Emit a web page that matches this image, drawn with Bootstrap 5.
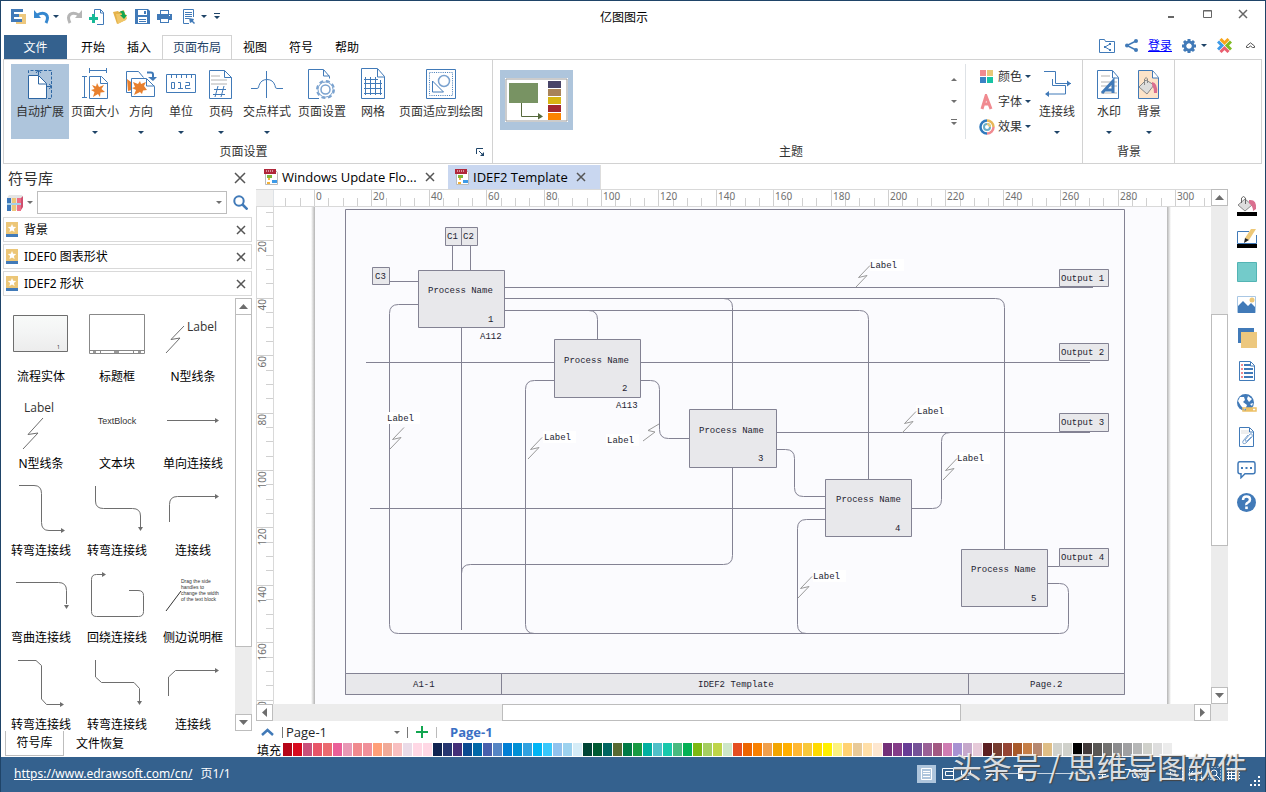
<!DOCTYPE html>
<html lang="zh-CN">
<head>
<meta charset="utf-8">
<meta name="viewport" content="width=device-width, initial-scale=1">
<title>亿图图示</title>
<link rel="stylesheet" href="https://cdn.jsdelivr.net/npm/bootstrap@5.3.0/dist/css/bootstrap.min.css">
<style>
:root{--navy:#1f4468;--bar:#34618e;--blue:#417ab8;--edge:#d2d2d2;--pick:#aec5dc}
body{font-family:"Noto Sans","Noto Sans CJK SC",sans-serif;font-size:12px;line-height:16px;color:#000;background:#fff}
button{background:none;border:0;padding:0;color:inherit;font-size:inherit;line-height:inherit}
svg{display:block;flex:none}
.app{height:100vh;border:1px solid var(--navy);border-bottom:0}
.titlebar,.menubar,.ribbon,.status,.side-head,.find-row,.lib-row,.side-tabs,.doc-tabs,.ruler-x,.hbar,.page-row,.swatches{flex:none}
.caret{width:0;height:0;border:3px solid transparent;border-top-color:#1f4468;border-bottom:0;display:inline-block}
.caret.soft{border-top-color:#707070}
.caret.up{border-top:0;border-bottom:3px solid #707070}
/* title bar */
.titlebar{height:34px;padding-left:10px}
.title-left{width:211px;gap:7px;padding-bottom:3px}
.title-right{width:239px}
/* ribbon tabs */
.menubar{height:25px;padding-left:3px}
.file-tab{width:63px;background:var(--bar);color:#fff}
.menu-tab{padding:0 11px;height:25px}
.menu-tab.on{border:1px solid var(--edge);border-bottom:0;background:#fff;color:var(--navy);padding:0 9px;width:70px}
.tabs-list{padding-left:3px}
.login{color:#00f}
/* ribbon */
.ribbon{margin:-1px 3px 0 2px;border:1px solid var(--edge);height:105px;color:#333}
.ribbon-group{border-right:1px solid var(--edge);padding-top:4px}
.group-label{height:26px;line-height:26px}
.tool{height:75px;width:40px;padding-top:4px}
.tool.w52{width:52px}.tool.w58{width:58px}.tool.w92{width:92px}.tool.w44{width:44px}
.tool .tool-name{margin-top:3px;height:18px;line-height:18px;white-space:nowrap}
.tool .caret{margin-top:10px}
.tool.on{background:var(--pick)}
.theme-card{width:73px;height:60px;background:var(--pick);padding:8px 5px;margin-top:6px}
.theme-opts{width:66px;padding-left:13px}
.theme-opts button{height:25px;gap:3px}
/* left panel */
.side{width:251px;padding-left:2px}
.side-head{height:26px;font-size:15px;line-height:26px;padding:0 6px 0 5px;color:#333}
.find-row{height:26px;padding:0 4px 3px 4px}
.lib-row{height:25px;border:1px solid #d9d9d9;margin-bottom:2px;padding:0 5px 0 2px;gap:6px}
.find-box{height:23px;border:1px solid #bdbdbd;width:190px}
.find-box input{border:0;outline:0;width:100%;font-size:12px}
.shapes{grid-template-columns:repeat(3,76px);grid-auto-rows:87px;padding-top:2px}
.shape-cell{width:76px;height:87px;white-space:nowrap}
.shape-cell svg{stroke:#6e6e6e;fill:none}
.shape-cell text{stroke:none;fill:#333}
.shape-cell .shape-name{height:18px;line-height:18px;display:block}
.side-tabs{height:26px;padding:0 0 1px 2px}
.side-tab-on{width:59px;border:1px solid #bdbdbd;border-top:0}
/* scroll bars */
.vbar{width:17px;background:#ececec}
.bar-btn{width:17px;height:17px;border:1px solid #bdbdbd;background:#fff;display:flex;align-items:center;justify-content:center;flex:none}
.thumb{background:#fff;border:1px solid #bdbdbd}
.hbar{height:17px;background:#ececec}
.tri{width:9px;height:9px;fill:#6d6d6d}
/* documents */
.doc-tab{height:24px;font-family:"Open Sans","Noto Sans CJK SC",sans-serif;font-size:13px;line-height:24px;padding:0 7px}
.doc-tab.on{background:#c9d7f0;width:153px;border-right:1px solid #ddd}
.doc-tab.first{width:187px;margin-left:5px;padding-left:3px}
.ruler-x{height:18px;border-top:1px solid #d9d9d9;border-bottom:1px solid #d9d9d9}
.ruler-corner{width:18px;background:#f0f0f0}
.ruler-y{width:18px;border-left:1px solid #d9d9d9;border-right:1px solid #d9d9d9}
.ruler-x text,.ruler-y text{font-size:10px;fill:#707070}
.canvas text{font-family:"Liberation Mono","Noto Sans CJK SC",monospace;font-size:9px;fill:#1e1e32}
.tools-right{width:37px}
.tools-right button{height:33px;width:37px;display:flex;align-items:center;justify-content:center}
.page-row{height:22px;padding-left:5px;font-family:"Open Sans","Noto Sans CJK SC",sans-serif}
.page-pick{width:119px;height:20px;border:0;padding:0 12px 0 2px;margin-left:1px;font-size:13px;line-height:20px;border-radius:0;
 --bs-form-select-bg-img:url("data:image/svg+xml,%3Csvg xmlns='http://www.w3.org/2000/svg' viewBox='0 0 6 3'%3E%3Cpath d='M0 0h6L3 3z' fill='%23707070'/%3E%3C/svg%3E");
 background-size:6px 3px;background-position:right 3px center}
.bar-mark{width:1px;height:11px;background:#777}
.swatches{height:14px;padding-left:1px}
.swatches b{font-weight:400;width:26px;white-space:nowrap}
.swatch{width:9px;height:13px;margin-right:1px;flex:none}
/* status bar */
.status{height:35px;background:var(--bar);color:#fff;padding:0 4px 2px 13px;position:relative}
.status a{color:#fff}
.status-right{gap:6px}
.zoom-range{width:92px;height:12px;appearance:none;background:linear-gradient(#c9d6e3,#c9d6e3) center/100% 1px no-repeat}
.zoom-range::-webkit-slider-thumb{appearance:none;width:5px;height:11px;background:#fff}
.stamp{position:absolute;right:18px;bottom:7px;font-size:30px;line-height:40px;font-weight:400;color:rgba(255,255,255,.82);text-shadow:1px 1px 1px #444;white-space:nowrap;pointer-events:none;font-family:"Noto Sans CJK SC",sans-serif}
</style>
</head>
<body>
<div class="app d-flex flex-column overflow-hidden">

<header class="titlebar d-flex align-items-center">
  <div class="title-left d-flex align-items-center">
    <svg width="16" height="16" viewBox="0 0 16 16"><path d="M5 5h10v10H5v-3h6V8H5z" fill="#edc87e"/><path d="M0 0h12v3H0zM0 5h8v3H0zM0 10h11v3H0zM0 0h3v13H0z" fill="#417ab8"/></svg>
    <button class="d-flex align-items-center" aria-label="撤销" style="gap:3px"><svg width="16" height="16" viewBox="0 0 16 16" fill="none" stroke="#3587cf" stroke-width="3"><path d="M3 6c8-4 13 0 9 8"/><path d="M0 1v8h7z" fill="#3587cf" stroke="none"/></svg><span class="caret"></span></button>
    <button aria-label="重做"><svg width="16" height="16" viewBox="0 0 16 16" fill="none" stroke="#b5b5b5" stroke-width="3"><path d="M13 6c-8-4-13 0-9 8"/><path d="M16 1v8H9z" fill="#b5b5b5" stroke="none"/></svg></button>
    <button aria-label="新建"><svg width="16" height="16" viewBox="0 0 16 16" fill="none"><path d="M5.500 8V.5h6l3 3V15.500H8M11.500.5v3.500h3" stroke="#417ab8"/><path d="M0 9.500h9M4.500 5v9" stroke="#17b997" stroke-width="3"/></svg></button>
    <button aria-label="打开"><svg width="16" height="16" viewBox="0 0 16 16"><path d="M1 3l5-1 1 1 5-2 2 10-9 4z" fill="#e5b24a"/><path d="M4 5l10 0 1 5-9 5z" fill="#f0c668"/><path d="M7 4c3-4 6-2 6 2h2l-3 4-4-4h2c0-2-1-3-3-2z" fill="#12a650"/></svg></button>
    <button aria-label="保存"><svg width="15" height="15" viewBox="0 0 15 15"><path d="M0 0h13l2 2v13H0z" fill="#417ab8"/><path d="M3 1h9v5H3zM3 8h9v6H3z" fill="#fff"/><path d="M9 2h2v3H9zM4 10h7v1H4zM4 12h7v1H4z" fill="#417ab8"/></svg></button>
    <button aria-label="打印"><svg width="15" height="15" viewBox="0 0 15 15"><path d="M3 1h9v4H3zM0 5h15v6H0zM3 9h9v5H3z" fill="#417ab8"/><path d="M4 2h7v3H4zM4 10h7v3H4zM12 6h1v1h-1z" fill="#fff"/></svg></button>
    <button class="d-flex align-items-center ms-1" aria-label="预览" style="gap:6px"><svg width="12" height="15" viewBox="0 0 12 15" fill="none" stroke="#417ab8"><path d="M6 14.500H.5V.5h10V8M2 3.500h7M2 5.500h7M2 7.500h7M2 9.500h4"/><path d="M6 9l5 1-1 2 2 2-1 1-2-2-2 1z" fill="#417ab8" stroke="none"/></svg><span class="caret"></span></button>
    <button aria-label="自定义"><svg width="6" height="7" viewBox="0 0 6 7" fill="#1f4468"><path d="M0 0h6v1H0zM0 3h6L3 6z"/></svg></button>
  </div>
  <div class="flex-grow-1 text-center">亿图图示</div>
  <div class="title-right d-flex justify-content-end align-items-center pe-3 pb-2">
    <button class="me-4 ms-auto" aria-label="最小化"><svg width="12" height="12" viewBox="0 0 12 12"><path d="M3 8h6v2H3z" fill="#666"/></svg></button>
    <button class="me-4" aria-label="最大化"><svg width="12" height="12" viewBox="0 0 12 12" fill="none" stroke="#666"><path d="M2.500 2.500h8v7h-8zM2.500 3h8"/></svg></button>
    <button aria-label="关闭"><svg width="12" height="12" viewBox="0 0 12 12" stroke="#666" stroke-width="1.500"><path d="M2 2l8 8M10 2l-8 8"/></svg></button>
  </div>
</header>

<nav class="menubar d-flex">
  <button class="file-tab">文件</button>
  <div class="tabs-list d-flex">
    <button class="menu-tab">开始</button><button class="menu-tab">插入</button><button class="menu-tab on">页面布局</button><button class="menu-tab">视图</button><button class="menu-tab">符号</button><button class="menu-tab">帮助</button>
  </div>
  <div class="ms-auto d-flex align-items-center pb-1" style="gap:10px;padding-right:10px">
    <button aria-label="共享文件夹"><svg width="16" height="14" viewBox="0 0 16 14" fill="none" stroke="#417ab8"><path d="M.5 13.500V.5h5l1 2h9v11z"/><path d="M11 5L6 8l5 3"/><path d="M10 4h2v2h-2zM5 7h2v2H5zM10 10h2v2h-2z" fill="#417ab8" stroke="none"/></svg></button>
    <button aria-label="共享"><svg width="13" height="13" viewBox="0 0 13 13"><path d="M11 2L2 6.500 11 11" fill="none" stroke="#417ab8" stroke-width="1.500"/><circle cx="11" cy="2" r="2" fill="#417ab8"/><circle cx="2" cy="6.500" r="2" fill="#417ab8"/><circle cx="11" cy="11" r="2" fill="#417ab8"/></svg></button>
    <a class="login" href="#">登录</a>
    <button class="d-flex align-items-center" style="gap:5px" aria-label="设置"><svg width="14" height="14" viewBox="0 0 14 14" fill="none" stroke="#417ab8"><circle cx="7" cy="7" r="4" stroke-width="3"/><path d="M7 0v3M7 11v3M0 7h3M11 7h3M2 2l2 2M10 10l2 2M2 12l2-2M10 4l2-2" stroke-width="3"/><circle cx="7" cy="7" r="2.500" fill="#fff" stroke="none"/></svg><span class="caret"></span></button>
    <button aria-label="应用"><svg width="15" height="15" viewBox="0 0 15 15" fill="none" stroke-width="3"><path d="M3.500 1l4 4 4-4" stroke="#f8a51b"/><path d="M1 3.500l4 4-4 4" stroke="#3e9be8"/><path d="M14 3.500l-4 4 4 4" stroke="#7fbb22"/><path d="M3.500 14l4-4 4 4" stroke="#ea5f70"/></svg></button>
    <button class="ms-1" aria-label="折叠功能区"><svg width="9" height="8" viewBox="0 0 9 8" fill="none" stroke="#555"><path d="M.5 4L4.500.8 8.500 4v1.500H6.500L4.500 4 2.500 5.500H.5z"/></svg></button>
  </div>
</nav>

<section class="ribbon d-flex text-center">
  <div class="ribbon-group" style="padding-left:7px;padding-right:5px">
    <div class="d-flex">
      <button class="tool w58 on d-flex flex-column align-items-center"><svg width="32" height="32" viewBox="0 0 32 32" fill="none" stroke="#2d66a3"><path d="M4.500 5V2.500h23v28H23" stroke-dasharray="3 1.500"/><path d="M4.500 7.500h10l8 8v15h-18z" fill="#fff"/><path d="M14.500 8v8h8"/><path d="M14.500 7V3M12 5l2.500-3L17 5M23 18.500h5M25 16l3 2.500L25 21"/></svg><span class="tool-name">自动扩展</span></button>
      <button class="tool w52 d-flex flex-column align-items-center"><svg width="32" height="32" viewBox="0 0 32 32" fill="none" stroke="#417ab8"><path d="M10.500 2.500h17M10.500 0v5M27.500 0v5M5.500 8v22M3 8.500h5M3 29.500h5M10.500 8.500h12l6 6v16h-18zM21.500 8.500v7h7"/><path d="M13 17l4 1.500 1-3.500 2 4 5-2-2.500 4L26 24l-4.500.5L21 29l-2-3-5 3 1.500-5L12 22l3.500-1z" fill="#e8802e" stroke="none"/></svg><span class="tool-name">页面大小</span><span class="caret"></span></button>
      <button class="tool d-flex flex-column align-items-center"><svg width="32" height="32" viewBox="0 0 32 32" fill="none" stroke="#417ab8"><path d="M6 24.500H1.500v-21h12l5 6"/><path d="M2 11l4 3 1 8-4 1z" fill="#e8802e" stroke="none"/><path d="M6.500 10.500h15l8 8v10h-23z" fill="#fff"/><path d="M21.500 11v7h8"/><path d="M22 4.500h4q2 0 2 2v3" stroke-width="2"/><path d="M23 9h9l-4 4z" fill="#417ab8" stroke="none"/><path d="M8 14l5 2 2-3 1 3 5-2-2 4 3 4-4 .5-1 3.500-2-2-6 3 2-5-4-2 3-1z" fill="#e8802e" stroke="none"/></svg><span class="tool-name">方向</span><span class="caret"></span></button>
      <button class="tool d-flex flex-column align-items-center"><svg width="32" height="32" viewBox="0 0 32 32" fill="none" stroke="#417ab8"><path d="M1.500 6.500h29v18h-29zM6.500 7v3M11.500 7v3M16.500 7v3M21.500 7v3M26.500 7v3M6.500 14.500h3v6h-3zM13 14.500h2.500v6M13 20.500h5M20.500 14.500h4v3h-4v3h5"/></svg><span class="tool-name">单位</span><span class="caret"></span></button>
      <button class="tool d-flex flex-column align-items-center"><svg width="32" height="32" viewBox="0 0 32 32" fill="none" stroke="#417ab8"><path d="M6 8h9M6 12h16M6 16h16" stroke="#d8d8d8" stroke-width="2"/><path d="M4.500 2.500h15l7 7v21h-22zM19.500 2.500v7h7M13 18l-3 11M19 18l-3 11M9 21.500h12M8 26.500h12"/></svg><span class="tool-name">页码</span><span class="caret"></span></button>
      <button class="tool w52 d-flex flex-column align-items-center"><svg width="32" height="32" viewBox="0 0 32 32" fill="none" stroke="#417ab8"><path d="M0 20.500h6q2 0 2-3 2-6 8-6t8 6q0 3 2 3h6M15.500 3v27"/></svg><span class="tool-name">交点样式</span><span class="caret"></span></button>
      <button class="tool w58 d-flex flex-column align-items-center"><svg width="32" height="32" viewBox="0 0 32 32" fill="none" stroke="#417ab8"><path d="M13 30.500H2.500v-29h15l6 7v2M17.500 2v6h6"/><g stroke="#7aa2cf"><circle cx="19.500" cy="21.500" r="8.500" stroke-dasharray="4 2.700" stroke-width="2"/><circle cx="19.500" cy="21.500" r="7.500" fill="#fff"/><circle cx="19.500" cy="21.500" r="4.500" stroke-width="1.500"/></g></svg><span class="tool-name">页面设置</span></button>
      <button class="tool w44 d-flex flex-column align-items-center"><svg width="32" height="32" viewBox="0 0 32 32" fill="none" stroke="#417ab8"><path d="M4.500.5h16l7 8v22h-23zM20.500 1v8h7M8.500 9v18M13.500 9v18M18.500 9v18M23.500 12v15M7 11.500h14M7 15.500h18M7 20.500h18M7 25.500h18"/></svg><span class="tool-name">网格</span></button>
      <button class="tool w92 d-flex flex-column align-items-center"><svg width="32" height="32" viewBox="0 0 32 32" fill="none" stroke="#417ab8"><path d="M1.500 1.500h29v29h-29z"/><path d="M4.500 4.500h23v23h-23z" stroke-dasharray="1 1.200"/><circle cx="19" cy="13" r="5.500" stroke="#7aa2cf" stroke-width="1.500"/><path d="M7.500 13v11h11z"/></svg><span class="tool-name">页面适应到绘图</span></button>
    </div>
    <div class="group-label d-flex align-items-center" style="padding-right:3px"><span class="flex-grow-1">页面设置</span><button aria-label="页面设置对话框"><svg width="8" height="8" viewBox="0 0 8 8"><path d="M.5 6V.5H7M3 3l4 4" fill="none" stroke="#1f4468"/><path d="M8 4v4H4z" fill="#1f4468"/></svg></button></div>
  </div>
  <div class="ribbon-group flex-grow-1" style="padding-left:7px">
    <div class="d-flex" style="height:75px">
      <button class="theme-card" aria-label="主题"><svg width="63" height="44" viewBox="0 0 63 44"><path d="M0 0h63v44H0z" fill="#fff"/><path d="M1 1h61v42H1z" fill="none" stroke="#999"/><path d="M4 5h29v20H4z" fill="#789363"/><path d="M16.500 25v13.500H34" fill="none" stroke="#56693c"/><path d="M33 35l5 3.500-5 3z" fill="#56693c"/><path d="M43 3h13v7H43z" fill="#484468"/><path d="M43 11h13v7H43z" fill="#a8835a"/><path d="M43 19h13v7H43z" fill="#d8b614"/><path d="M43 27h13v7H43z" fill="#a02830"/><path d="M43 35h13v7H43z" fill="#fb8300"/></svg></button>
      <div class="ms-auto d-flex flex-column align-items-center" style="width:22px;gap:19px;padding-top:14px">
        <span class="caret up"></span><span class="caret soft"></span>
        <svg width="6" height="6" viewBox="0 0 6 6" fill="#707070" style="margin-top:-3px"><path d="M0 0h6v1H0zM0 3h6L3 6z"/></svg>
      </div>
      <div class="theme-opts border-start text-start">
        <button class="d-flex align-items-center"><svg width="16" height="16" viewBox="0 0 16 16"><path d="M1 1h6v6H1z" fill="#f08a90"/><path d="M8 1h6v6H8z" fill="#e8c878"/><path d="M1 8h6v6H1z" fill="#3a82c4"/><path d="M8 8h6v6H8z" fill="#17c3a4"/></svg>颜色<span class="caret"></span></button>
        <button class="d-flex align-items-center"><svg width="16" height="16" viewBox="0 0 16 16" fill="none" stroke="#f08a90" stroke-width="3"><path d="M3 15L7 2l5 13M5 10h6"/></svg>字体<span class="caret"></span></button>
        <button class="d-flex align-items-center"><svg width="16" height="16" viewBox="0 0 16 16" fill="none" stroke-width="2.500"><path d="M8 1.500a6.500 6.500 0 0 0 0 13" stroke="#2f79bd"/><path d="M8 1.500a6.500 6.500 0 0 1 6.500 6.500" stroke="#e8b85a"/><path d="M14.500 8a6.500 6.500 0 0 1-6.500 6.500" stroke="#f08a90"/><circle cx="8" cy="8" r="3" stroke="#6aaec8" stroke-width="2"/><path d="M8 5a3 3 0 0 1 3 3" stroke="#e8c878" stroke-width="2"/></svg>效果<span class="caret"></span></button>
      </div>
      <button class="tool w52 d-flex flex-column align-items-center" style="margin-right:-1px"><svg width="32" height="32" viewBox="0 0 32 32" fill="none" stroke="#417ab8"><path d="M3 3.500h11.500v12H30M11.500 11v6.500h13v8.500H5"/><path d="M30 15.500l-4-3v6zM4 26l4-3v6z" fill="#417ab8" stroke="none"/></svg><span class="tool-name">连接线</span><span class="caret"></span></button>
    </div>
    <div class="group-label">主题</div>
  </div>
  <div class="ribbon-group" style="padding-left:6px;padding-right:5px">
    <div class="d-flex">
      <button class="tool d-flex flex-column align-items-center"><svg width="32" height="32" viewBox="0 0 32 32" fill="none" stroke="#417ab8"><path d="M8 8h9M8 14h16M8 18h16M8 25h16" stroke="#d8d8d8" stroke-width="2"/><path d="M4.500 2.500h15l6 7v21h-21zM19.500 3v7h6"/><path d="M9 25L20 13l0 12M12 22h8" stroke-width="3"/></svg><span class="tool-name">水印</span><span class="caret"></span></button>
      <button class="tool d-flex flex-column align-items-center"><svg width="32" height="32" viewBox="0 0 32 32" fill="none" stroke="#417ab8"><path d="M5.500 2.500h14l6 7v21h-20z" fill="#fde3c8"/><path d="M19.500 3v7h6" fill="#fff"/><path d="M6 19l7-7 8 5-7 9z" fill="#ddd" stroke="#888"/><path d="M11.500 17v-6q2-3 3 0v4" stroke="#888"/><path d="M19 14q6 1 5 11h-3q0-5-2-8z" fill="#da6f8f" stroke="none"/></svg><span class="tool-name">背景</span><span class="caret"></span></button>
    </div>
    <div class="group-label">背景</div>
  </div>
  <div style="width:86px"></div>
</section>

<main class="d-flex flex-grow-1 overflow-hidden" style="padding-top:1px">
  <aside class="side d-flex flex-column">
    <div class="side-head d-flex align-items-center">符号库<button class="ms-auto" aria-label="关闭面板"><svg width="12" height="12" viewBox="0 0 12 12" stroke="#555" stroke-width="1.500"><path d="M1 1l10 10M11 1L1 11"/></svg></button></div>
    <div class="find-row d-flex align-items-center">
      <button class="d-flex align-items-center" style="gap:4px;width:30px" aria-label="选择库"><svg width="16" height="16" viewBox="0 0 16 16"><path d="M0 3l2-3h13l1 2v10l-2 3H0z" fill="#e4e4e4"/><path d="M0 3h4v13H0z" fill="#3b78bb"/><path d="M5 3h4v13H5z" fill="#edc678"/><path d="M10 3h4v13h-4z" fill="#ee6f86"/><path d="M14 3l2-2v11l-2 3z" fill="#cf4f6e"/><path d="M0 8h14v2H0z" fill="#a8d0e8"/></svg><span class="caret soft"></span></button>
      <div class="find-box d-flex align-items-center px-1"><input type="text" aria-label="搜索符号"><span class="caret soft"></span></div>
      <button class="ms-auto" aria-label="搜索"><svg width="15" height="15" viewBox="0 0 15 15" fill="none" stroke="#417ab8" stroke-width="2"><circle cx="6" cy="6" r="4.700"/><path d="M9.500 9.500l5 5" stroke-width="2.500"/></svg></button>
    </div>
    <div class="lib-row d-flex align-items-center"><svg width="12" height="15" viewBox="0 0 12 15"><path d="M0 0h12v12H0z" fill="#ecc677"/><path d="M0 12h12v3H0z" fill="#417ab8"/><path d="M6 2l1.200 2.800 3 .2-2.300 2 .7 3L6 8.400 3.400 10l.7-3-2.300-2 3-.2z" fill="#fff"/></svg>背景<button class="ms-auto" aria-label="关闭"><svg width="10" height="10" viewBox="0 0 10 10" stroke="#555" stroke-width="1.500"><path d="M1 1l8 8M9 1L1 9"/></svg></button></div>
    <div class="lib-row d-flex align-items-center"><svg width="12" height="15" viewBox="0 0 12 15"><path d="M0 0h12v12H0z" fill="#ecc677"/><path d="M0 12h12v3H0z" fill="#417ab8"/><path d="M6 2l1.200 2.800 3 .2-2.300 2 .7 3L6 8.400 3.400 10l.7-3-2.300-2 3-.2z" fill="#fff"/></svg>IDEF0 图表形状<button class="ms-auto" aria-label="关闭"><svg width="10" height="10" viewBox="0 0 10 10" stroke="#555" stroke-width="1.500"><path d="M1 1l8 8M9 1L1 9"/></svg></button></div>
    <div class="lib-row d-flex align-items-center"><svg width="12" height="15" viewBox="0 0 12 15"><path d="M0 0h12v12H0z" fill="#ecc677"/><path d="M0 12h12v3H0z" fill="#417ab8"/><path d="M6 2l1.200 2.800 3 .2-2.300 2 .7 3L6 8.400 3.400 10l.7-3-2.300-2 3-.2z" fill="#fff"/></svg>IDEF2 形状<button class="ms-auto" aria-label="关闭"><svg width="10" height="10" viewBox="0 0 10 10" stroke="#555" stroke-width="1.500"><path d="M1 1l8 8M9 1L1 9"/></svg></button></div>
    <div class="d-flex flex-grow-1 overflow-hidden">
      <div class="shapes d-grid flex-grow-1 overflow-hidden align-content-start">
        <button class="shape-cell"><svg width="76" height="66" viewBox="0 0 76 66"><defs><linearGradient id="fade" x2="0" y2="1"><stop stop-color="#f8faf9"/><stop offset=".5" stop-color="#f3f4f4"/><stop offset="1" stop-color="#ececec"/></linearGradient></defs><path d="M10.500 13.500h54v36h-54z" fill="url(#fade)"/><text x="54" y="47" font-size="5">1</text></svg><span class="shape-name">流程实体</span></button>
        <button class="shape-cell"><svg width="76" height="66" viewBox="0 0 76 66"><path d="M10.500 12.500h55v39h-55zM10.500 48.500h55M21.500 48.500v3M54.500 48.500v3" stroke="#888"/><path d="M14 50h3M35 50h5M59 50h3" stroke="#333"/></svg><span class="shape-name">标题框</span></button>
        <button class="shape-cell"><svg width="76" height="66" viewBox="0 0 76 66"><path d="M11 51L25 36l-9 1.500L29 24"/><text x="32" y="29" font-size="12" font-family="Open Sans">Label</text></svg><span class="shape-name">N型线条</span></button>
        <button class="shape-cell"><svg width="76" height="66" viewBox="0 0 76 66"><path d="M20 60L35 44l-10 1.500L40 29"/><text x="21" y="23" font-size="12" font-family="Open Sans">Label</text></svg><span class="shape-name">N型线条</span></button>
        <button class="shape-cell"><svg width="76" height="66" viewBox="0 0 76 66"><text x="38" y="35" font-size="9" text-anchor="middle" font-family="Liberation Sans">TextBlock</text></svg><span class="shape-name">文本块</span></button>
        <button class="shape-cell"><svg width="76" height="66" viewBox="0 0 76 66"><path d="M12 31.500h49"/><path d="M64 31.500l-4-2.500v5z" fill="#6e6e6e" stroke="none"/></svg><span class="shape-name">单向连接线</span></button>
        <button class="shape-cell"><svg width="76" height="66" viewBox="0 0 76 66"><path d="M16 9.500h15q7.500 0 7.500 8v29q0 8 7.500 8h12"/><path d="M62 54.500l-4-2.500v5z" fill="#6e6e6e" stroke="none"/></svg><span class="shape-name">转弯连接线</span></button>
        <button class="shape-cell"><svg width="76" height="66" viewBox="0 0 76 66"><path d="M16.500 10v15q0 7.500 8 7.500h29q8 0 8 7.500v11"/><path d="M61.500 55l-2.500-4h5z" fill="#6e6e6e" stroke="none"/></svg><span class="shape-name">转弯连接线</span></button>
        <button class="shape-cell"><svg width="76" height="66" viewBox="0 0 76 66"><path d="M14.500 46V28.500q0-8 8-8h38"/><path d="M64 20.500l-4-2.500v5z" fill="#6e6e6e" stroke="none"/></svg><span class="shape-name">连接线</span></button>
        <button class="shape-cell"><svg width="76" height="66" viewBox="0 0 76 66"><path d="M13 19.500h42.500q8 0 8 8V41"/><path d="M63.500 46l-2.500-4h5z" fill="#6e6e6e" stroke="none"/></svg><span class="shape-name">弯曲连接线</span></button>
        <button class="shape-cell"><svg width="76" height="66" viewBox="0 0 76 66"><path d="M50 27.500h9q5.500 0 5.500 5v16q0 5-5 5h-42q-5 0-5-5v-32q0-5 5-5h6"/><path d="M27 11.500L23 9v5z" fill="#6e6e6e" stroke="none"/></svg><span class="shape-name">回绕连接线</span></button>
        <button class="shape-cell"><svg width="76" height="66" viewBox="0 0 76 66" font-size="5" font-family="Liberation Sans"><path d="M11 48l15-20" stroke="#333"/><text x="26" y="20">Drag the side</text><text x="26" y="26">handles to</text><text x="26" y="32">change the width</text><text x="26" y="38">of the text block</text></svg><span class="shape-name">侧边说明框</span></button>
        <button class="shape-cell"><svg width="76" height="66" viewBox="0 0 76 66"><path d="M15 10.500h18l5.500 5V49l5 5.500h14"/><path d="M61 54.500l-4-2.500v5z" fill="#6e6e6e" stroke="none"/></svg><span class="shape-name">转弯连接线</span></button>
        <button class="shape-cell"><svg width="76" height="66" viewBox="0 0 76 66"><path d="M16.500 10v17l6 5.500H55l5.500 6V51"/><path d="M60.500 55l-2.500-4h5z" fill="#6e6e6e" stroke="none"/></svg><span class="shape-name">转弯连接线</span></button>
        <button class="shape-cell"><svg width="76" height="66" viewBox="0 0 76 66"><path d="M13.500 46V27l7-6.500h40"/><path d="M64 20.500l-4-2.500v5z" fill="#6e6e6e" stroke="none"/></svg><span class="shape-name">连接线</span></button>
      </div>
      <div class="vbar d-flex flex-column">
        <button class="bar-btn" aria-label="向上"><svg class="tri" viewBox="0 0 9 9"><path d="M0 7h9L4.500 2z"/></svg></button>
        <div class="thumb" style="height:77%;margin-top:-1px"></div>
        <button class="bar-btn mt-auto" aria-label="向下"><svg class="tri" viewBox="0 0 9 9"><path d="M0 2h9L4.500 7z"/></svg></button>
      </div>
    </div>
    <div class="side-tabs d-flex"><button class="side-tab-on">符号库</button><button class="px-2 ms-1">文件恢复</button></div>
  </aside>

  <section class="d-flex flex-column flex-grow-1 overflow-hidden" style="padding-left:4px">
    <div class="doc-tabs d-flex">
      <div class="doc-tab first d-flex align-items-center"><svg class="me-1" width="14" height="16" viewBox="0 0 14 16"><path d="M1.500.5h9l3 3v12h-12z" fill="#fff" stroke="#bbb"/><path d="M0 0h12v5H0z" fill="#b0273a"/><path d="M3 6h5v3H3z" fill="#7fb53c"/><path d="M4 9h2v2H4z" fill="#f3b23b"/><path d="M3 13h3v2H3z" fill="#f3b23b"/><path d="M8 11h5v3H8z" fill="#3e9be8"/><path d="M2 2h8" stroke="#fff" stroke-dasharray="1 1"/></svg>Windows Update Flo...<button class="ms-2" aria-label="关闭"><svg width="10" height="10" viewBox="0 0 10 10" stroke="#555" stroke-width="1.500"><path d="M1 1l8 8M9 1L1 9"/></svg></button></div>
      <div class="doc-tab on d-flex align-items-center"><svg class="me-1" width="14" height="16" viewBox="0 0 14 16"><path d="M1.500.5h9l3 3v12h-12z" fill="#fff" stroke="#bbb"/><path d="M0 0h12v5H0z" fill="#b0273a"/><path d="M3 6h5v3H3z" fill="#7fb53c"/><path d="M4 9h2v2H4z" fill="#f3b23b"/><path d="M3 13h3v2H3z" fill="#f3b23b"/><path d="M8 11h5v3H8z" fill="#3e9be8"/><path d="M2 2h8" stroke="#fff" stroke-dasharray="1 1"/></svg>IDEF2 Template<button class="ms-2" aria-label="关闭"><svg width="10" height="10" viewBox="0 0 10 10" stroke="#555" stroke-width="1.500"><path d="M1 1l8 8M9 1L1 9"/></svg></button></div>
    </div>
    <div class="d-flex flex-grow-1 overflow-hidden">
      <div class="d-flex flex-column flex-grow-1 overflow-hidden">
        <div class="d-flex flex-grow-1 overflow-hidden">
          <div class="d-flex flex-column flex-grow-1 overflow-hidden">
            <div class="ruler-x d-flex overflow-hidden"><div class="ruler-corner border-end"></div><svg id="rulerX" width="936" height="16"></svg></div>
            <div class="d-flex flex-grow-1 overflow-hidden">
              <div class="ruler-y overflow-hidden"><svg id="rulerY" width="16" height="520"></svg></div>
              <div class="canvas flex-grow-1 overflow-hidden">
                <svg width="936" height="520" viewBox="274 207 936 520" fill="none" stroke="#838293">
                  <defs><path id="bolt" d="M0 0L11-11.500L2.500-9.500L14-21.500"/>
                  <linearGradient id="shL"><stop stop-color="#fff"/><stop offset="1" stop-color="#b4b4b4"/></linearGradient><linearGradient id="shR"><stop stop-color="#b4b4b4"/><stop offset="1" stop-color="#fff"/></linearGradient></defs>
                  <g stroke="none"><path d="M311 207h4v520h-4z" fill="url(#shL)"/><path d="M1167 207h4v520h-4z" fill="url(#shR)"/><path d="M315 207h852v520H315z" fill="#fbfbfe"/></g>
                  <path d="M345.500 209.500h779v485h-779z"/>
                  <path d="M345.500 673.500h779v21h-779zM501.500 673.500v21M968.500 673.500v21" fill="#e8e8eb"/>
                  <path d="M452.500 245v26M470.500 245v26M389 281.500h30M504 287.500h589M504 298.500h491.500q9 0 9 9V549M723.500 298.500q9 0 9 9V409M504 310.500h355.500q9 0 9 9V479M588.500 310.500q9 0 9 9V339"/>
                  <path d="M418 304.500h-19.500q-9 0-9 9v311q0 9 9 9h661q9 0 9-9v-32q0-9-9-9H1047M461.500 328v302M366 362.500h188M640 362.500h450M554 380.500h-19.500q-9 0-9 9v235q0 9 9 9M640 380.500h10.500q9 0 9 9v40q0 9 9 9H689"/>
                  <path d="M776 432.500h314M732.500 467v88.500q0 9-9 9h-253q-9 0-9 9M776 449.500h9.500q9 0 9 9v29q0 9 9 9H825M370 508.500h455M911 508.500h21.500q9 0 9-9v-58q0-9 9-9M825 519.500h-18.500q-9 0-9 9v96q0 9 9 9M1047 566.500h12"/>
                  <g fill="#e8e8eb"><path d="M445.500 227.500h16v18h-16zM461.500 227.500h16v18h-16zM372.500 267.500h17v17h-17z"/>
                  <path d="M418.500 270.500h86v57h-86zM554.500 339.500h86v58h-86zM689.500 409.500h87v58h-87zM825.500 479.500h86v57h-86zM961.500 549.500h86v57h-86z"/>
                  <path d="M1059.500 269.500h49v17h-49zM1059.500 343.500h49v17h-49zM1059.500 413.500h49v18h-49zM1059.500 548.500h49v18h-49z"/></g>
                  <g fill="#fff" stroke="none"><path d="M870 259h34v12h-34zM387 412h33v12h-33zM543 431h33v12h-33zM606 434h33v12h-33zM916 405h34v12h-34zM957 452h33v12h-33zM813 570h33v12h-33z"/></g>
                  <g stroke="#999"><use href="#bolt" x="856" y="287"/><use href="#bolt" x="390" y="449"/><use href="#bolt" x="528" y="459"/><use href="#bolt" x="902" y="433"/><use href="#bolt" x="943" y="480"/><use href="#bolt" x="798" y="598"/><path d="M643 441l12-9-7-1.500 11-6.500"/></g>
                  <g stroke="none">
                    <text x="447" y="239">C1</text><text x="463" y="239">C2</text><text x="375" y="279">C3</text>
                    <text x="428" y="293">Process Name</text><text x="488" y="322">1</text><text x="480" y="339">A112</text>
                    <text x="564" y="363">Process Name</text><text x="622" y="391">2</text><text x="616" y="408">A113</text>
                    <text x="699" y="433">Process Name</text><text x="758" y="461">3</text>
                    <text x="836" y="502">Process Name</text><text x="895" y="531">4</text>
                    <text x="971" y="572">Process Name</text><text x="1031" y="601">5</text>
                    <text x="1061" y="281">Output 1</text><text x="1061" y="355">Output 2</text><text x="1061" y="425">Output 3</text><text x="1061" y="560">Output 4</text>
                    <text x="870" y="268">Label</text><text x="387" y="421">Label</text><text x="544" y="440">Label</text><text x="607" y="443">Label</text><text x="917" y="414">Label</text><text x="957" y="461">Label</text><text x="813" y="579">Label</text>
                    <text x="413" y="687">A1-1</text><text x="698" y="687">IDEF2 Template</text><text x="1030" y="687">Page.2</text>
                  </g>
                </svg>
              </div>
            </div>
          </div>
          <div class="vbar d-flex flex-column">
            <button class="bar-btn" aria-label="向上"><svg class="tri" viewBox="0 0 9 9"><path d="M0 7h9L4.500 2z"/></svg></button>
            <div style="height:21%"></div><div class="thumb" style="height:45%"></div>
            <button class="bar-btn mt-auto" aria-label="向下"><svg class="tri" viewBox="0 0 9 9"><path d="M0 2h9L4.500 7z"/></svg></button>
          </div>
        </div>
        <div class="hbar d-flex" style="padding-right:17px">
          <button class="bar-btn" aria-label="向左"><svg class="tri" viewBox="0 0 9 9"><path d="M7 0v9L2 4.500z"/></svg></button>
          <div style="width:24%"></div><div class="thumb" style="width:48%"></div>
          <button class="bar-btn ms-auto" aria-label="向右"><svg class="tri" viewBox="0 0 9 9"><path d="M2 0v9l5-4.500z"/></svg></button>
        </div>
      </div>
      <div class="tools-right">
        <button aria-label="填充"><svg width="20" height="20" viewBox="0 0 20 20"><path d="M0 16h20v4H0z"/><path d="M1 9l7-6 7 6-7 6z" fill="#ddd" stroke="#888"/><path d="M4.500 7V2q2-3 4 0v6" fill="none" stroke="#666"/><path d="M12 4q8-1 7 9l-3 2q0-5-4-8z" fill="#da6f8f"/></svg></button>
        <button aria-label="线条"><svg width="20" height="20" viewBox="0 0 20 20"><path d="M0 15h20v4H0z"/><path d="M12 2.500H.5v12h19V6" fill="none" stroke="#417ab8"/><path d="M14 0h5l-7 11-4-2z" fill="#edc878"/><path d="M8 9l4 2-5 3z" fill="#222"/></svg></button>
        <button aria-label="形状"><svg width="20" height="20" viewBox="0 0 20 20"><path d="M.5.5h19v19H.5z" fill="#73cbca" stroke="#53b4b4"/></svg></button>
        <button aria-label="图片"><svg width="19" height="17" viewBox="0 0 19 17"><path d="M.5.5h18v16H.5z" fill="#fff" stroke="#a9c7e4"/><path d="M1 10l5-5 5 5 3-3 4 4v6H1z" fill="#417ab8"/><circle cx="15" cy="4" r="2.500" fill="#edc878"/></svg></button>
        <button aria-label="图层"><svg width="20" height="20" viewBox="0 0 20 20"><path d="M1 0h16v15H1z" fill="#417ab8"/><path d="M4 4h16v16H4z" fill="#edc87e"/></svg></button>
        <button aria-label="属性"><svg width="16" height="20" viewBox="0 0 16 20"><path d="M.5.5h11l4 4v15H.5zM11.500 1v4h4" fill="none" stroke="#417ab8"/><path d="M5 4h6M5 8h9M5 12h9M5 16h9" stroke="#417ab8" stroke-width="2"/><path d="M2 4h2M2 8h2M2 12h2M2 16h2" stroke="#f08a90" stroke-width="2"/></svg></button>
        <button aria-label="超链接"><svg width="20" height="20" viewBox="0 0 20 20"><circle cx="8.500" cy="8.500" r="8.500" fill="#417ab8"/><path d="M3 3l4 0 1 3-2 2 4 3-2 5-4-4-3-5zM11 2l4 3-3 3-2-3zM13 10l3-1-1 3z" fill="#fff"/><path d="M6 14h6v3H6zM13 14h6v3h-6zM9 15.500h7" fill="none" stroke="#edc064" stroke-width="1.500"/></svg></button>
        <button aria-label="附件"><svg width="16" height="20" viewBox="0 0 16 20" fill="none" stroke="#417ab8"><path d="M2 4h8M2 6h8" stroke="#ddd"/><path d="M.5.500h10l4 4v15H.5zM10.500 1v4h4"/><path d="M9 8l-5 6q-1 4 3 2l6-6q1-4-2-3l-5 6q0 2 2 1l4-4" stroke="#7aa2cf"/></svg></button>
        <button aria-label="批注"><svg width="19" height="18" viewBox="0 0 19 18"><path d="M3 .7h13q2 0 2 2v8q0 2-2 2H8l-4 4v-4H3q-2 0-2-2v-8q0-2 2-2z" fill="none" stroke="#417ab8" stroke-width="1.500"/><path d="M4 6h2v2H4zM8.500 6h2v2h-2zM13 6h2v2h-2z" fill="#417ab8"/></svg></button>
        <button aria-label="帮助"><svg width="19" height="19" viewBox="0 0 19 19"><circle cx="9.500" cy="9.500" r="9.500" fill="#417ab8"/><path d="M6 7q0-3.500 3.500-3.500T13 6.500q0 2-2 3t-1.500 2.500" fill="none" stroke="#fff" stroke-width="2.500"/><path d="M8.200 13.500h2.600v2.600H8.200z" fill="#fff"/></svg></button>
      </div>
    </div>
    <div class="page-row d-flex align-items-center">
      <button aria-label="展开页面"><svg width="13" height="8" viewBox="0 0 13 8" fill="none" stroke="#417ab8" stroke-width="2.500"><path d="M1 7l5.500-5L12 7"/></svg></button>
      <span class="bar-mark ms-2"></span>
      <select class="page-pick form-select" aria-label="页面"><option>Page-1</option></select>
      <span class="bar-mark ms-1"></span>
      <button class="mx-2" aria-label="添加页面"><svg width="12" height="12" viewBox="0 0 12 12" stroke="#12a650" stroke-width="2"><path d="M0 6h12M6 0v12"/></svg></button>
      <span class="bar-mark opacity-50"></span>
      <button class="fw-bold" style="font-size:13px;margin-left:13px;color:#3a6fc4">Page-1</button>
    </div>
    <div class="swatches d-flex" id="swatches"><b>填充</b></div>
  </section>
</main>

<footer class="status d-flex align-items-center">
  <a href="https://www.edrawsoft.com/cn/">https://www.edrawsoft.com/cn/</a><span class="ms-2">页1/1</span>
  <div class="status-right ms-auto d-flex align-items-center">
    <button aria-label="普通视图" style="background:#aec5dc;padding:3px 4px"><svg width="11" height="12" viewBox="0 0 11 12" fill="none" stroke="#fff"><path d="M.5.500h10v11H.5zM2 3.500h7M2 5.500h7M2 8.500h7"/></svg></button>
    <button aria-label="分页视图"><svg width="12" height="12" viewBox="0 0 12 12" fill="none" stroke="#fff"><path d="M.5.500h11v11H.5zM3.500 3.500h8v4h-8z"/></svg></button>
    <button aria-label="演示"><svg width="12" height="12" viewBox="0 0 12 12" fill="none" stroke="#fff"><path d="M0 1.500h12M1.500 2v5h9V2M6 7v4M3 11.500h6"/></svg></button>
    <button aria-label="缩小" class="ms-2"><svg width="8" height="8" viewBox="0 0 8 8" stroke="#fff"><path d="M0 4.500h8"/></svg></button>
    <input class="zoom-range" type="range" min="0" max="100" value="20" aria-label="缩放">
    <button aria-label="放大"><svg width="8" height="8" viewBox="0 0 8 8" stroke="#fff"><path d="M0 4.500h8M4.500 0v8"/></svg></button>
    <span class="mx-2 px-1">70%</span>
    <button aria-label="适合页面" class="ms-1"><svg width="13" height="13" viewBox="0 0 13 13" fill="none" stroke="#fff"><path d="M.5.500h12v12H.5z" stroke-dasharray="2 1"/><path d="M5 3v5h4"/></svg></button>
    <button aria-label="适合宽度"><svg width="13" height="13" viewBox="0 0 13 13" fill="none" stroke="#fff"><path d="M.5.500h12v12H.5z" stroke-dasharray="2 1"/><path d="M2 6.500h9M4 4L2 6.500 4 9M9 4l2 2.500L9 9"/></svg></button>
    <button aria-label="缩放选区"><svg width="13" height="13" viewBox="0 0 13 13" fill="none" stroke="#fff"><path d="M.5.500h12v12H.5z" stroke-dasharray="1 2"/><circle cx="6" cy="6" r="3"/><path d="M8 8l4 4"/></svg></button>
    <button aria-label="网格"><svg width="13" height="13" viewBox="0 0 13 13" stroke="#fff"><path d="M1.500 1v12M4.500 1v12M8.500 1v12M11.500 1v12M0 2.500h13M0 5.500h13M0 8.500h13M0 11.500h13"/></svg></button>
    <svg class="align-self-end ms-1 mt-3" width="11" height="11" viewBox="0 0 11 11" fill="#fff"><path d="M8 0h2v2H8zM4 4h2v2H4zM8 4h2v2H8zM0 8h2v2H0zM4 8h2v2H4zM8 8h2v2H8z"/></svg>
  </div>
  <div class="stamp">头条号 / 思维导图软件</div>
</footer>
</div>

<script src="https://cdn.jsdelivr.net/npm/bootstrap@5.3.0/dist/js/bootstrap.bundle.min.js"></script>
<script>
// Rulers: one labelled tick every 20 mm, a short one every 5 mm.
const PX_PER_MM = 2.87;
function ruler(id, zero, from, to, vertical) {
  let ticks = '', labels = '';
  for (let mm = from; mm <= to; mm += 5) {
    const p = Math.round(zero + mm * PX_PER_MM) + 0.5;
    const major = mm % 20 === 0, start = major ? 0 : (vertical ? 9 : 8);
    ticks += vertical ? `M${start} ${p}H16` : `M${p} ${start}V16`;
    if (major && mm >= 0) labels += vertical
      ? `<text transform="translate(9 ${p + (mm < 100 ? 12 : 18)}) rotate(-90)">${mm}</text>`
      : `<text x="${p + 1.5}" y="10">${mm}</text>`;
  }
  document.getElementById(id).innerHTML = `<path d="${ticks}" stroke="#d0d0d0" fill="none"/>${labels}`;
}
ruler('rulerX', 40, -10, 310, false);
ruler('rulerY', -24, 10, 190, true);

const colours = ('b50518 d80a1e c9507a e85568 eb6a70 ea5f98 e898b5 f08a8e f0909a ff9f78 f0aa98 f8bfc0 eadbe8 ffd8e5 ffd8e5 ' +
 '102350 263670 452f78 0a4a90 0068a8 4860ac 5585c4 007fd5 0090d5 30a2e0 00b5f5 38c8fb 90c2ee 9cd2ef d5ecf7 ' +
 '004435 005a32 006560 586a32 007a45 189a42 00b0a0 50c0c8 18c8ac 48ba80 04b055 7db812 a5ce60 bfd548 cde6c8 ' +
 'e54e20 ec6500 f88000 f0a04c f2a500 ffaf00 ffb833 f8c83a ffda00 fff000 fcf280 ffd272 e8ca98 ffdfa8 fde7d0 ' +
 '733078 853c88 683c95 765298 9a6096 a25882 cf7cb2 a892d2 c6a8cb e6cad9 5c1f22 763c30 954434 a8592a c67e46 ' +
 'b68870 dfbe86 d0d1cb d0d1cb 000000 423a3a 585654 72716f 8c8c8e a0a0a2 b6b7b7 d0d1cb dedede ececec').split(' ');
document.getElementById('swatches').insertAdjacentHTML('beforeend',
  colours.map(c => `<button class="swatch" style="background:#${c}" aria-label="#${c}"></button>`).join(''));
</script>
</body>
</html>
